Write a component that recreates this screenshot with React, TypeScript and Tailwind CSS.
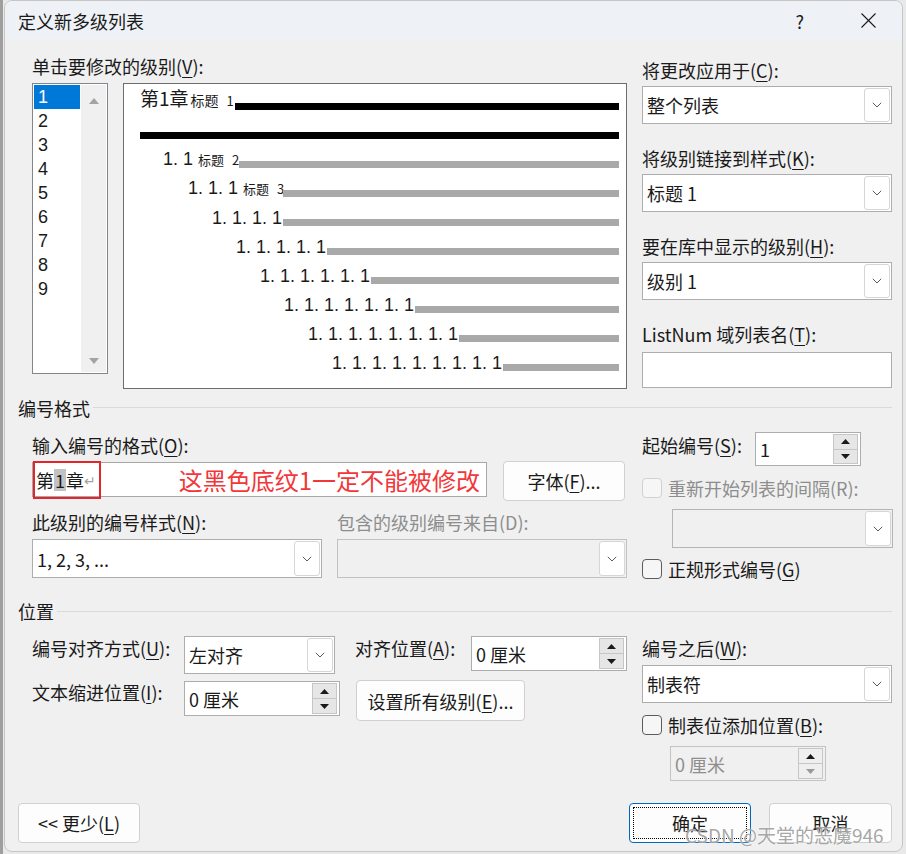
import React from "react";

const Chevron = () => (
  <svg width="10" height="6" viewBox="0 0 10 6">
    <path d="M0.8 0.8 L5 5 L9.2 0.8" fill="none" stroke="#5a5a5a" strokeWidth="1" />
  </svg>
);

const Tri = ({ dir, color = "#1a1a1a", w = 9, h = 5 }: { dir: "up" | "down"; color?: string; w?: number; h?: number }) => (
  <svg width={w} height={h} viewBox={`0 0 ${w} ${h}`}>
    <path d={dir === "up" ? `M0 ${h} L${w / 2} 0 L${w} ${h}Z` : `M0 0 L${w} 0 L${w / 2} ${h}Z`} fill={color} />
  </svg>
);

const U = ({ children }: { children: React.ReactNode }) => (
  <span className="underline underline-offset-[3px] decoration-1">{children}</span>
);

const Label = ({ children, className = "" }: { children: React.ReactNode; className?: string }) => (
  <div className={`h-[22px] leading-[22px] text-[18px] whitespace-nowrap ${className}`}>{children}</div>
);

const Combo = ({ className = "", text = "", disabled = false }: { className?: string; text?: string; disabled?: boolean }) => (
  <div className={`flex items-stretch border border-[#adadad] ${disabled ? "bg-[#f0f0f0]" : "bg-white"} ${className}`}>
    <span className="flex-1 flex items-center pl-[4px] text-[18px] leading-[22px] whitespace-nowrap">{text}</span>
    <div className="w-[26px] my-[1px] mr-[1px] border border-[#d6d6d6] rounded-[3px] bg-white flex items-center justify-center">
      <Chevron />
    </div>
  </div>
);

const Spin = ({ className = "", text = "", disabled = false }: { className?: string; text?: string; disabled?: boolean }) => (
  <div className={`flex items-stretch border border-[#adadad] ${disabled ? "bg-[#f0f0f0] text-[#8e8e8e]" : "bg-white"} ${className}`}>
    <span className="flex-1 flex items-center pl-[4px] text-[18px] leading-[22px] whitespace-nowrap">{text}</span>
    <div className="w-[25px] mr-[2px] my-[1px] flex flex-col">
      <div className={`flex-1 border border-[#c6c6c6] ${disabled ? "bg-[#efefef]" : "bg-[#e6e6e6]"} flex items-center justify-center`}>
        <Tri dir="up" />
      </div>
      <div className={`flex-1 border border-t-0 border-[#c6c6c6] ${disabled ? "bg-[#efefef]" : "bg-[#e6e6e6]"} flex items-center justify-center`}>
        <Tri dir="down" color={disabled ? "#9a9a9a" : "#1a1a1a"} />
      </div>
    </div>
  </div>
);

const Check = ({ disabled = false }: { disabled?: boolean }) => (
  <div
    className={`w-[20px] h-[20px] shrink-0 rounded-[4px] border ${
      disabled ? "border-[#d2d2d2] bg-[#f6f6f6]" : "border-[#5c5c5c] bg-[#f6f6f6]"
    }`}
  />
);

const Btn = ({ className = "", children }: { className?: string; children: React.ReactNode }) => (
  <div
    className={`flex items-center justify-center bg-[#fdfdfd] border border-[#d0d0d0] rounded-[4px] text-[18px] leading-[22px] whitespace-nowrap ${className}`}
  >
    {children}
  </div>
);

const rows = [
  { pl: "pl-[23px]", w: "w-[99px]", num: "1. 1", tag: "2" },
  { pl: "pl-[48px]", w: "w-[143px]", num: "1. 1. 1", tag: "3" },
  { pl: "pl-[72px]", w: "w-[143px]", num: "1. 1. 1. 1", tag: "" },
  { pl: "pl-[96px]", w: "w-[187px]", num: "1. 1. 1. 1. 1", tag: "" },
  { pl: "pl-[120px]", w: "w-[231px]", num: "1. 1. 1. 1. 1. 1", tag: "" },
  { pl: "pl-[144px]", w: "w-[275px]", num: "1. 1. 1. 1. 1. 1. 1", tag: "" },
  { pl: "pl-[168px]", w: "w-[319px]", num: "1. 1. 1. 1. 1. 1. 1. 1", tag: "" },
  { pl: "pl-[192px]", w: "w-[363px]", num: "1. 1. 1. 1. 1. 1. 1. 1. 1", tag: "" },
];

const CJK = "font-['Noto_Sans_CJK_SC','Noto_Sans',sans-serif]";

export default function App() {
  return (
    <div className={`w-[906px] h-[854px] flex bg-[#e9e9e9] overflow-hidden text-[#1a1a1a] ${CJK}`}>
      <div className="w-[3px] bg-[#9f9f9f]" />
      <div className="ml-[1px] w-[899px] h-[852px] rounded-[8px] border border-[#c6c6c6] bg-[#f0f0f0] flex flex-col overflow-hidden relative">
        {/* Title bar */}
        <div className="h-[39px] shrink-0 bg-[#eef2f7] flex items-center pl-[13px] pr-[26px]">
          <span className="text-[18px] leading-[22px]">定义新多级列表</span>
          <span className="ml-auto text-[18px] leading-[22px]">?</span>
          <div className="ml-[57px]">
            <svg width="15" height="15" viewBox="0 0 15 15">
              <path d="M0.5 0.5 L14.5 14.5 M14.5 0.5 L0.5 14.5" stroke="#1a1a1a" strokeWidth="1.1" />
            </svg>
          </div>
        </div>

        {/* Body */}
        <div className="flex flex-col pl-[13px] pr-[10px]">
          {/* Section 1 */}
          <div className="flex pt-[15px] pl-[14px]">
            <div className="w-[595px] flex flex-col">
              <Label>
                单击要修改的级别(<U>V</U>):
              </Label>
              <div className="flex mt-[6px] gap-[15px]">
                {/* level list */}
                <div className="w-[76px] h-[291px] bg-white border border-[#82868c] flex p-px">
                  <div className="w-[46px] flex flex-col font-['Liberation_Sans',sans-serif]">
                    {[1, 2, 3, 4, 5, 6, 7, 8, 9].map((n) => (
                      <div
                        key={n}
                        className={`h-[24px] leading-[24px] pl-[4px] text-[18px] ${n === 1 ? "bg-[#0078d7] text-white" : ""}`}
                      >
                        {n}
                      </div>
                    ))}
                  </div>
                  <div className="ml-px w-[25px] bg-[#f0f0f0] flex flex-col items-center justify-between pt-[13px] pb-[8px]">
                    <Tri dir="up" color="#a3a3a3" w={10} h={6} />
                    <Tri dir="down" color="#a3a3a3" w={10} h={6} />
                  </div>
                </div>
                {/* preview */}
                <div className="w-[504px] h-[306px] bg-white border border-[#6e6e6e] flex flex-col pl-[16px] pr-[7px] font-['Liberation_Sans','Noto_Sans_CJK_SC',sans-serif]">
                  <div className="flex items-end h-[27px]">
                    <div className={`w-[95px] shrink-0 whitespace-nowrap leading-[20px] text-[19px] ${CJK}`}>
                      第1章<span className="text-[14px] ml-[2px]">标题</span>
                      <span className="text-[13px] ml-[8px]">1</span>
                    </div>
                    <div className="flex-1 h-[7px] bg-black mb-[1px]" />
                  </div>
                  <div className="h-[7px] bg-black mt-[21px]" />
                  <div className="mt-px flex flex-col">
                    {rows.map((r, i) => (
                      <div key={i} className="flex items-end h-[29px]">
                        <div className={`${r.w} ${r.pl} shrink-0 whitespace-nowrap text-[18px] leading-[18px]`}>
                          {r.num}
                          {r.tag && (
                            <span className={`text-[13px] ml-[5px] ${CJK}`}>
                              标题<span className="ml-[8px]">{r.tag}</span>
                            </span>
                          )}
                        </div>
                        <div className="flex-1 h-[7px] bg-[#a9a9a9] mb-[1px]" />
                      </div>
                    ))}
                  </div>
                </div>
              </div>
            </div>
            <div className="ml-[15px] w-[250px] flex flex-col pt-[4px]">
              <Label>
                将更改应用于(<U>C</U>):
              </Label>
              <Combo className="mt-[5px] h-[38px]" text="整个列表" />
              <Label className="mt-[23px]">
                将级别链接到样式(<U>K</U>):
              </Label>
              <Combo className="mt-[5px] h-[38px]" text="标题 1" />
              <Label className="mt-[23px]">
                要在库中显示的级别(<U>H</U>):
              </Label>
              <Combo className="mt-[5px] h-[38px]" text="级别 1" />
              <Label className="mt-[23px]">
                ListNum 域列表名(<U>T</U>):
              </Label>
              <div className="mt-[7px] h-[36px] bg-white border border-[#adadad]" />
            </div>
          </div>

          {/* Section 2 header */}
          <div className="flex items-center mt-[8px] h-[22px]">
            <span className="text-[18px] leading-[22px]">编号格式</span>
            <div className="flex-1 h-px bg-[#dadada] ml-[3px] mb-[2px]" />
          </div>

          {/* Section 2 */}
          <div className="flex pl-[14px]">
            <div className="w-[595px] flex flex-col pt-[15px]">
              <Label>
                输入编号的格式(<U>O</U>):
              </Label>
              <div className="flex items-start mt-[5px]">
                <div className="relative mt-px w-[455px] h-[35px] bg-white border border-[#a8a8a8] flex items-center">
                  <span className="pl-[3px] text-[18px] leading-[22px] flex items-center">
                    第<span className="inline-block bg-[#c2c2c2] h-[22px] px-px">1</span>章
                  </span>
                  <span className="text-[#a3a3a3] text-[14px] leading-[22px]">↵</span>
                  <span className="ml-auto mr-[6px] text-[24px] leading-[28px] text-[#f2373b]">这黑色底纹1一定不能被修改</span>
                  <div className="absolute left-0 top-[-2px] w-[68px] h-[38px] border-2 border-[#e2272b]" />
                </div>
                <Btn className="ml-[16px] w-[122px] h-[40px]">
                  字体(<U>F</U>)...
                </Btn>
              </div>
              <div className="flex mt-[10px]">
                <Label className="w-[305px]">
                  此级别的编号样式(<U>N</U>):
                </Label>
                <Label className="text-[#8d8d8d]">包含的级别编号来自(D):</Label>
              </div>
              <div className="flex mt-[6px] gap-[15px]">
                <Combo className="w-[290px] h-[39px]" text="1, 2, 3, ..." />
                <Combo className="w-[290px] h-[39px] border-[#c2c2c2]" disabled />
              </div>
            </div>
            <div className="ml-[15px] w-[250px] flex flex-col pt-[13px]">
              <div className="flex items-start">
                <Label className="w-[113px] mt-[2px]">
                  起始编号(<U>S</U>):
                </Label>
                <Spin className="w-[106px] h-[34px]" text="1" />
              </div>
              <div className="flex items-center mt-[12px] h-[20px]">
                <Check disabled />
                <span className="ml-[6px] text-[18px] leading-[22px] text-[#8d8d8d] whitespace-nowrap">重新开始列表的间隔(R):</span>
              </div>
              <Combo className="ml-[30px] w-[221px] h-[39px] mt-[11px] border-[#b5b5b5]" disabled />
              <div className="flex items-center mt-[11px] h-[20px]">
                <Check />
                <span className="ml-[6px] text-[18px] leading-[22px] whitespace-nowrap">
                  正规形式编号(<U>G</U>)
                </span>
              </div>
            </div>
          </div>

          {/* Section 3 header */}
          <div className="flex items-center mt-[21px] h-[22px]">
            <span className="text-[18px] leading-[22px]">位置</span>
            <div className="flex-1 h-px bg-[#dadada] ml-[3px]" />
          </div>

          {/* Section 3 */}
          <div className="flex pl-[14px]">
            <div className="w-[595px] flex flex-col pt-[14px]">
              <div className="flex items-start">
                <Label className="w-[152px] mt-px">
                  编号对齐方式(<U>U</U>):
                </Label>
                <Combo className="w-[151px] h-[38px]" text="左对齐" />
                <Label className="ml-[20px] w-[116px] mt-px">
                  对齐位置(<U>A</U>):
                </Label>
                <Spin className="w-[156px] h-[35px]" text="0 厘米" />
              </div>
              <div className="flex items-start mt-[6px]">
                <Label className="w-[152px] mt-px">
                  文本缩进位置(<U>I</U>):
                </Label>
                <Spin className="w-[156px] h-[35px] mt-px" text="0 厘米" />
                <Btn className="ml-[16px] w-[169px] h-[41px]">
                  设置所有级别(<U>E</U>)...
                </Btn>
              </div>
            </div>
            <div className="ml-[15px] w-[250px] flex flex-col pt-[15px]">
              <Label>
                编号之后(<U>W</U>):
              </Label>
              <Combo className="mt-[6px] h-[38px]" text="制表符" />
              <div className="flex items-center mt-[12px] h-[20px]">
                <Check />
                <span className="ml-[6px] text-[18px] leading-[22px] whitespace-nowrap">
                  制表位添加位置(<U>B</U>):
                </span>
              </div>
              <Spin className="ml-[28px] w-[156px] h-[35px] mt-[11px] border-[#c4c4c4]" text="0 厘米" disabled />
            </div>
          </div>

          {/* Bottom buttons */}
          <div className="flex mt-[22px]">
            <Btn className="w-[122px] h-[40px]">
              &lt;&lt; 更少(<U>L</U>)
            </Btn>
            <div className="ml-auto w-[122px] h-[40px] bg-[#fdfdfd] border border-[#0067c0] rounded-[4px] p-[3px] flex">
              <div className="flex-1 border border-dotted border-black flex items-center justify-center text-[18px] leading-[22px]">
                确定
              </div>
            </div>
            <Btn className="ml-[18px] w-[123px] h-[40px]">取消</Btn>
          </div>
        </div>

        {/* watermark */}
        <div className="absolute left-[680px] top-[823px] text-[19px] leading-[22px] text-[#9c9c9c]/90 whitespace-nowrap [text-shadow:0_0_2px_#ffffff]">
          CSDN @天堂的恶魔946
        </div>
      </div>
    </div>
  );
}
